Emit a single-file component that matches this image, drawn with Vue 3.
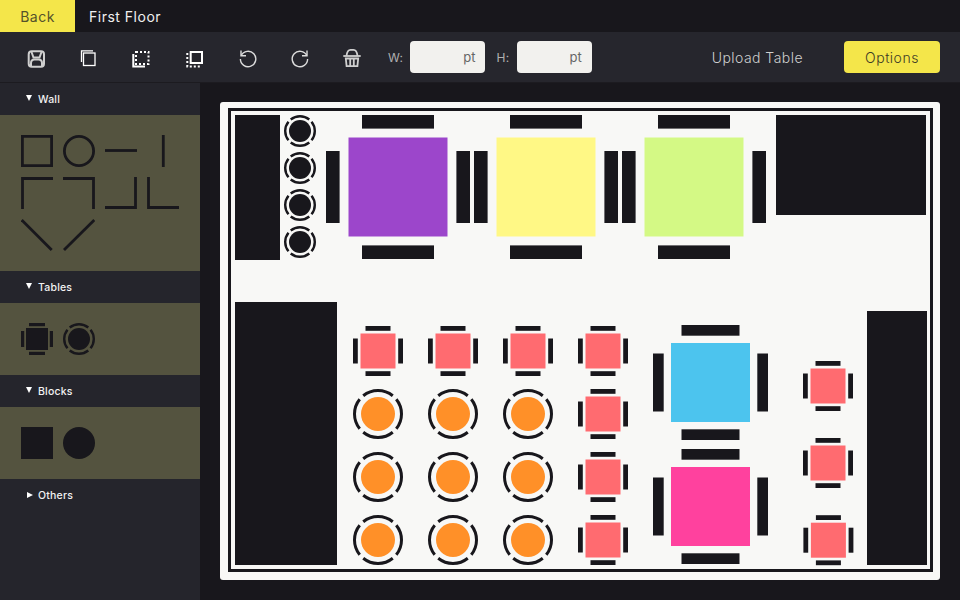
<script setup>
const DARK = '#18171c'

const wallShapes = [
  'M1.4 1.4H30.6V30.6H1.4Z',
  'M16 1.4A14.6 14.6 0 1 1 16 30.6A14.6 14.6 0 1 1 16 1.4Z',
  'M0 15.5H32',
  'M16.3 0V32',
  'M1.5 32V1.5H32',
  'M0 1.5H30.5V32',
  'M0 30.5H30.5V0',
  'M1.5 0V30.5H32',
  'M0.7 1L30.7 31',
  'M31.3 1L1 31'
]

function squareTable(cx, cy, half, reach, thick, span, fill) {
  return [
    { x: cx - half, y: cy - half, w: half * 2, h: half * 2, fill },
    { x: cx - span, y: cy - reach, w: span * 2, h: thick, fill: DARK },
    { x: cx - span, y: cy + reach - thick, w: span * 2, h: thick, fill: DARK },
    { x: cx - reach, y: cy - span, w: thick, h: span * 2, fill: DARK },
    { x: cx + reach - thick, y: cy - span, w: thick, h: span * 2, fill: DARK }
  ]
}

const red = '#ff6b70'
const smallAt = [
  [378, 351], [453, 351], [528, 351], [603, 351],
  [603, 414], [603, 477], [603, 540],
  [828, 386], [828, 463], [828.4, 540.2]
]

const rects = [
  { x: 235, y: 115, w: 45, h: 145, fill: DARK },
  { x: 776, y: 115, w: 150, h: 100, fill: DARK },
  { x: 235, y: 302, w: 102, h: 263, fill: DARK },
  { x: 867, y: 311, w: 60, h: 254, fill: DARK },
  ...squareTable(398, 187, 49.5, 72, 13.6, 36, '#9c46cb'),
  ...squareTable(546, 187, 49.5, 72, 13.6, 36, '#fff885'),
  ...squareTable(694, 187, 49.5, 72, 13.6, 36, '#d4f985'),
  ...squareTable(710.5, 382.5, 39.5, 57.5, 10.7, 29, '#4cc4ee'),
  ...squareTable(710.5, 506.5, 39.5, 57.5, 10.7, 29, '#ff419e'),
  ...smallAt.flatMap(([x, y]) => squareTable(x, y, 17.5, 25, 4.8, 12.5, red))
]

const rounds = [
  ...[131, 168, 205, 242].map((cy) => ({ cx: 300, cy, core: 11, ring: 14.8, width: 2.4, fill: DARK })),
  ...[378, 453, 528].flatMap((cx) =>
    [414, 477, 540].map((cy) => ({ cx, cy, core: 17, ring: 23.5, width: 3, fill: '#ff9028' }))
  )
]

const sideTable = squareTable(16, 16, 11, 16, 3.2, 8, DARK)
</script>

<template>
  <div class="app">
    <header class="topbar">
      <button class="back">Back</button>
      <span class="title">First Floor</span>
    </header>

    <div class="toolbar">
      <div class="tools">
        <svg class="tool" viewBox="0 0 24 24" stroke="#cfcfcf" stroke-width="2">
          <rect x="4.7" y="5.3" width="15.3" height="15.4" rx="3" />
          <path d="M7.5 6L9.5 11.5H15.5L17.5 6" />
          <path d="M7 20V17Q7 13.5 10.5 13.5H14.5Q18 13.5 18 17V20" />
        </svg>
        <svg class="tool" viewBox="0 0 24 24" stroke="#fff" stroke-width="1.3">
          <path d="M4.5 16V4.8H16" />
          <rect x="6.5" y="7" width="11.5" height="12.5" />
        </svg>
        <svg class="tool" viewBox="0 0 24 24" stroke="#fff" stroke-width="2">
          <rect x="6" y="6" width="12.5" height="12" stroke-dasharray="2 2" />
          <path d="M3.3 8V20.6H15" />
        </svg>
        <svg class="tool" viewBox="0 0 24 24" stroke="#fff" stroke-width="2">
          <rect x="7.7" y="6" width="11.3" height="11" />
          <path d="M4.3 7V20.5H18" stroke-dasharray="2 2" />
        </svg>
        <svg class="tool" viewBox="0 0 24 24" stroke="#dcdcdc" stroke-width="1.4">
          <path d="M5.2 9.6A7.7 7.7 0 1 1 4.4 13" />
          <path d="M5 4.6V9.8H10" />
        </svg>
        <svg class="tool" viewBox="0 0 24 24" stroke="#dcdcdc" stroke-width="1.4">
          <path d="M17.8 9.6A7.7 7.7 0 1 0 18.6 13" />
          <path d="M18 4.6V9.8H13" />
        </svg>
        <svg class="tool" viewBox="0 0 24 24" stroke="#cfcfcf" stroke-width="1.8">
          <path d="M1.3 10H18.7" />
          <path d="M4.5 10C5 5.4 6.5 3.8 8.5 3.8H11.5C13.5 3.8 15 5.4 15.5 10" />
          <path d="M3.8 12.5L4.6 20.2H15.4L16.2 12.5Z" />
          <path d="M8.2 12.5V20M11.8 12.5V20" />
        </svg>
      </div>

      <label class="dim dim-w">
        <span class="dim-label">W:</span>
        <span class="field">pt</span>
      </label>
      <label class="dim dim-h">
        <span class="dim-label">H:</span>
        <span class="field">pt</span>
      </label>

      <button class="upload">Upload Table</button>
      <button class="options">Options</button>
    </div>

    <div class="body">
      <aside class="sidebar">
        <div class="group-head"><i class="tri down"></i>Wall</div>
        <div class="palette">
          <svg v-for="d in wallShapes" :key="d" class="piece" viewBox="0 0 32 32">
            <path :d="d" fill="none" :stroke="DARK" stroke-width="2.8" />
          </svg>
        </div>

        <div class="group-head"><i class="tri down"></i>Tables</div>
        <div class="palette">
          <svg class="piece" viewBox="0 0 32 32">
            <rect v-for="(r, i) in sideTable" :key="i" :x="r.x" :y="r.y" :width="r.w" :height="r.h" :fill="r.fill" />
          </svg>
          <svg class="piece" viewBox="0 0 32 32">
            <circle cx="16" cy="16" r="11" :fill="DARK" />
            <circle cx="16" cy="16" r="14.8" fill="none" :stroke="DARK" stroke-width="2.4" pathLength="360" stroke-dasharray="78 12" stroke-dashoffset="39" />
          </svg>
        </div>

        <div class="group-head"><i class="tri down"></i>Blocks</div>
        <div class="palette">
          <div class="block-square"></div>
          <div class="block-round"></div>
        </div>

        <div class="group-head"><i class="tri right"></i>Others</div>
      </aside>

      <main class="stage">
        <div class="sheet">
          <svg class="plan" viewBox="220 102 720 478">
            <rect x="229.5" y="109.5" width="702" height="461" fill="none" :stroke="DARK" stroke-width="3" />
            <rect v-for="(r, i) in rects" :key="i" :x="r.x" :y="r.y" :width="r.w" :height="r.h" :fill="r.fill" />
            <g v-for="(c, i) in rounds" :key="'c' + i">
              <circle :cx="c.cx" :cy="c.cy" :r="c.core" :fill="c.fill" />
              <circle :cx="c.cx" :cy="c.cy" :r="c.ring" fill="none" :stroke="DARK" :stroke-width="c.width" pathLength="360" stroke-dasharray="78 12" stroke-dashoffset="39" />
            </g>
          </svg>
        </div>
      </main>
    </div>
  </div>
</template>

<style>
html, body {
  margin: 0;
  background: #18171c;
}
</style>

<style scoped>
.app {
  width: 960px;
  height: 600px;
  display: flex;
  flex-direction: column;
  overflow: hidden;
  background: #18171c;
  font-family: Inter, "Open Sans", sans-serif;
  color: #fff;
}
button {
  border: 0;
  padding: 0;
  font: inherit;
  cursor: pointer;
}
.topbar {
  height: 32px;
  flex: none;
  display: flex;
  align-items: center;
}
.back {
  width: 75px;
  height: 32px;
  background: #f4e64a;
  color: #55522a;
  font-size: 14px;
  letter-spacing: 0.5px;
}
.title {
  margin-left: 14px;
  font-size: 14px;
  letter-spacing: 0.5px;
  color: #f0f0f0;
}
.toolbar {
  height: 50px;
  flex: none;
  display: flex;
  align-items: center;
  background: #26262d;
  padding: 0 20px 0 24px;
  box-sizing: border-box;
}
.tools {
  display: flex;
  gap: 29px;
}
.tool {
  width: 24px;
  height: 24px;
  fill: none;
  display: block;
  margin-top: 2px;
}
.dim {
  display: flex;
  align-items: center;
}
.dim-w {
  margin-left: 22px;
  gap: 7px;
}
.dim-h {
  margin-left: 11px;
  gap: 7px;
}
.dim-label {
  font-size: 12px;
  color: #b0b0b0;
  letter-spacing: 0.4px;
}
.field {
  width: 75px;
  height: 32px;
  box-sizing: border-box;
  padding-right: 10px;
  display: flex;
  align-items: center;
  justify-content: flex-end;
  border-radius: 4px;
  background: #f2f1ee;
  color: #666;
  font-size: 13px;
}
.upload {
  margin-left: auto;
  margin-right: 41px;
  background: none;
  color: #cfcfcf;
  font-size: 14px;
  letter-spacing: 0.45px;
  font-weight: 300;
}
.options {
  width: 96px;
  height: 32px;
  border-radius: 4px;
  background: #f4e64a;
  color: #3c3a26;
  font-size: 14px;
  letter-spacing: 0.5px;
  font-weight: 300;
}
.body {
  flex: 1;
  min-height: 0;
  display: flex;
  border-top: 1px solid #1c1b20;
}
.sidebar {
  width: 200px;
  flex: none;
  background: #25252c;
}
.group-head {
  height: 32px;
  display: flex;
  align-items: center;
  padding-left: 26px;
  font-size: 10.5px;
  font-weight: 500;
  letter-spacing: 0.2px;
  color: #f2f2f2;
}
.tri {
  width: 0;
  height: 0;
}
.tri.down {
  border-left: 3.5px solid transparent;
  border-right: 3.5px solid transparent;
  border-top: 6px solid #fff;
  margin-top: -2px;
  margin-right: 6px;
}
.tri.right {
  margin-left: 1px;
  border-top: 3.5px solid transparent;
  border-bottom: 3.5px solid transparent;
  border-left: 6px solid #fff;
  margin-right: 5px;
}
.palette {
  background: #54533f;
  padding: 20px 21px;
  display: flex;
  flex-wrap: wrap;
  gap: 10px;
}
.piece {
  width: 32px;
  height: 32px;
  display: block;
}
.block-square {
  width: 32px;
  height: 32px;
  background: #18171c;
}
.block-round {
  width: 32px;
  height: 32px;
  border-radius: 50%;
  background: #18171c;
}
.stage {
  flex: 1;
  padding: 19px 20px 20px;
}
.sheet {
  width: 720px;
  height: 478px;
  border-radius: 3px;
  background: #f8f8f6;
  overflow: hidden;
}
.plan {
  display: block;
  width: 720px;
  height: 478px;
}
</style>
